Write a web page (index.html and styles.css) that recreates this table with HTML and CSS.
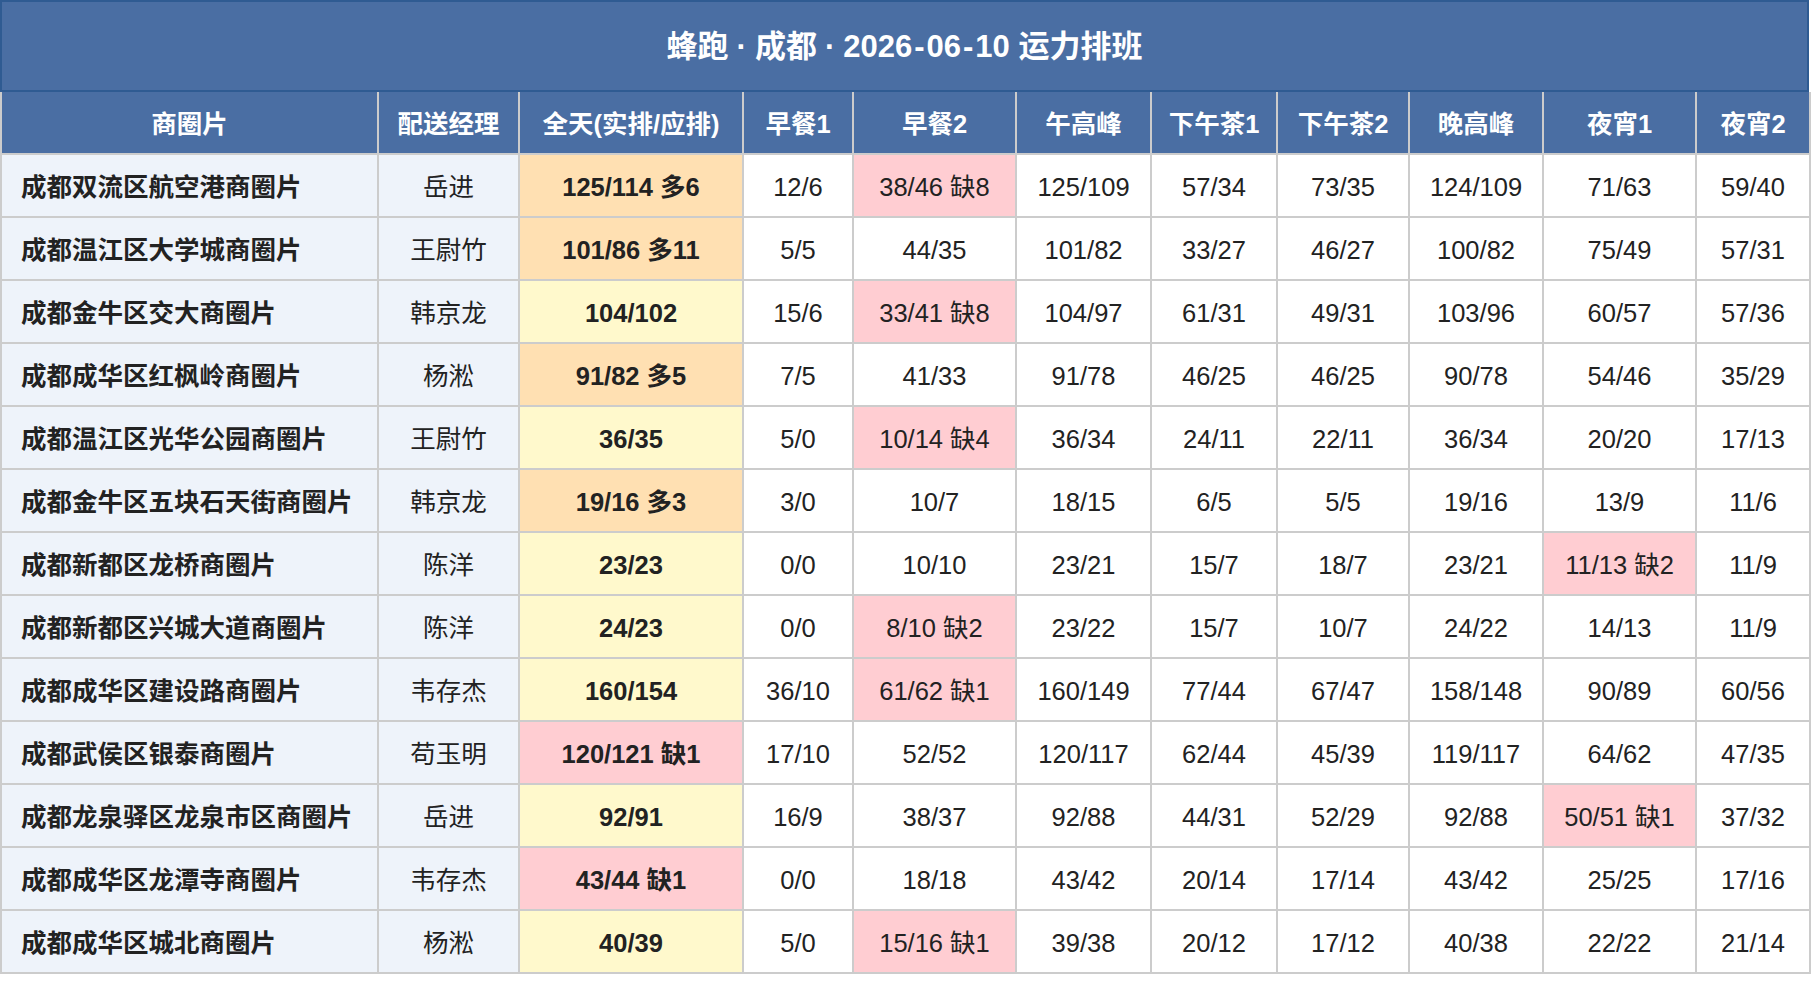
FILE: index.html
```html
<!DOCTYPE html>
<html lang="zh-CN">
<head>
<meta charset="utf-8">
<title>运力排班</title>
<link rel="stylesheet" href="styles.css">
</head>
<body>
<div class="sheet">
  <div class="title">蜂跑<span class="dot">·</span>成都<span class="dot">·</span>2026<span class="dash">-</span>06<span class="dash">-</span>10 运力排班</div>
  <table class="grid">
    <colgroup>
      <col class="c-area"><col class="c-mgr"><col class="c-day"><col class="c-b1"><col class="c-b2"><col class="c-noon"><col class="c-t1"><col class="c-t2"><col class="c-eve"><col class="c-n1"><col class="c-n2">
    </colgroup>
    <thead>
      <tr><th>商圈片</th><th>配送经理</th><th>全天(实排/应排)</th><th>早餐1</th><th>早餐2</th><th>午高峰</th><th>下午茶1</th><th>下午茶2</th><th>晚高峰</th><th>夜宵1</th><th>夜宵2</th></tr>
    </thead>
    <tbody>
      <tr><td class="area">成都双流区航空港商圈片</td><td class="mgr">岳进</td><td class="day over">125/114 多6</td><td>12/6</td><td class="short">38/46 缺8</td><td>125/109</td><td>57/34</td><td>73/35</td><td>124/109</td><td>71/63</td><td>59/40</td></tr>
      <tr><td class="area">成都温江区大学城商圈片</td><td class="mgr">王尉竹</td><td class="day over">101/86 多11</td><td>5/5</td><td>44/35</td><td>101/82</td><td>33/27</td><td>46/27</td><td>100/82</td><td>75/49</td><td>57/31</td></tr>
      <tr><td class="area">成都金牛区交大商圈片</td><td class="mgr">韩京龙</td><td class="day ok">104/102</td><td>15/6</td><td class="short">33/41 缺8</td><td>104/97</td><td>61/31</td><td>49/31</td><td>103/96</td><td>60/57</td><td>57/36</td></tr>
      <tr><td class="area">成都成华区红枫岭商圈片</td><td class="mgr">杨淞</td><td class="day over">91/82 多5</td><td>7/5</td><td>41/33</td><td>91/78</td><td>46/25</td><td>46/25</td><td>90/78</td><td>54/46</td><td>35/29</td></tr>
      <tr><td class="area">成都温江区光华公园商圈片</td><td class="mgr">王尉竹</td><td class="day ok">36/35</td><td>5/0</td><td class="short">10/14 缺4</td><td>36/34</td><td>24/11</td><td>22/11</td><td>36/34</td><td>20/20</td><td>17/13</td></tr>
      <tr><td class="area">成都金牛区五块石天街商圈片</td><td class="mgr">韩京龙</td><td class="day over">19/16 多3</td><td>3/0</td><td>10/7</td><td>18/15</td><td>6/5</td><td>5/5</td><td>19/16</td><td>13/9</td><td>11/6</td></tr>
      <tr><td class="area">成都新都区龙桥商圈片</td><td class="mgr">陈洋</td><td class="day ok">23/23</td><td>0/0</td><td>10/10</td><td>23/21</td><td>15/7</td><td>18/7</td><td>23/21</td><td class="short">11/13 缺2</td><td>11/9</td></tr>
      <tr><td class="area">成都新都区兴城大道商圈片</td><td class="mgr">陈洋</td><td class="day ok">24/23</td><td>0/0</td><td class="short">8/10 缺2</td><td>23/22</td><td>15/7</td><td>10/7</td><td>24/22</td><td>14/13</td><td>11/9</td></tr>
      <tr><td class="area">成都成华区建设路商圈片</td><td class="mgr">韦存杰</td><td class="day ok">160/154</td><td>36/10</td><td class="short">61/62 缺1</td><td>160/149</td><td>77/44</td><td>67/47</td><td>158/148</td><td>90/89</td><td>60/56</td></tr>
      <tr><td class="area">成都武侯区银泰商圈片</td><td class="mgr">苟玉明</td><td class="day short">120/121 缺1</td><td>17/10</td><td>52/52</td><td>120/117</td><td>62/44</td><td>45/39</td><td>119/117</td><td>64/62</td><td>47/35</td></tr>
      <tr><td class="area">成都龙泉驿区龙泉市区商圈片</td><td class="mgr">岳进</td><td class="day ok">92/91</td><td>16/9</td><td>38/37</td><td>92/88</td><td>44/31</td><td>52/29</td><td>92/88</td><td class="short">50/51 缺1</td><td>37/32</td></tr>
      <tr><td class="area">成都成华区龙潭寺商圈片</td><td class="mgr">韦存杰</td><td class="day short">43/44 缺1</td><td>0/0</td><td>18/18</td><td>43/42</td><td>20/14</td><td>17/14</td><td>43/42</td><td>25/25</td><td>17/16</td></tr>
      <tr><td class="area">成都成华区城北商圈片</td><td class="mgr">杨淞</td><td class="day ok">40/39</td><td>5/0</td><td class="short">15/16 缺1</td><td>39/38</td><td>20/12</td><td>17/12</td><td>40/38</td><td>22/22</td><td>21/14</td></tr>
    </tbody>
  </table>
</div>
</body>
</html>
```

FILE: styles.css
```css
html, body {
  margin: 0;
  padding: 0;
  background: #ffffff;
}

body {
  font-family: "Liberation Sans", "Noto Sans CJK SC", sans-serif;
  color: #222222;
}

.sheet {
  width: 1809px;
}

.title {
  box-sizing: border-box;
  height: 92px;
  background: #4a6ea3;
  border: 2px solid #2f5b92;
  color: #ffffff;
  font-size: 31px;
  font-weight: bold;
  line-height: 1.2;
  padding-top: 2px;
  display: flex;
  align-items: center;
  justify-content: center;
}

.title .dot {
  padding: 0 8px;
}

.title .dash {
  padding: 0 2px;
}

.grid {
  width: 1809px;
  table-layout: fixed;
  border-collapse: collapse;
  font-size: 25.5px;
  line-height: 1.2;
}

.c-area { width: 377px; }
.c-mgr { width: 141px; }
.c-day { width: 224px; }
.c-b1 { width: 110px; }
.c-b2 { width: 163px; }
.c-noon { width: 135px; }
.c-t1 { width: 126px; }
.c-t2 { width: 132px; }
.c-eve { width: 134px; }
.c-n1 { width: 153px; }
.c-n2 { width: 114px; }

.grid th {
  height: 57px;
  padding: 4px 0 0;
  background: #4a6ea3;
  color: #ffffff;
  font-weight: bold;
  text-align: center;
  border: 2px solid #cccccc;
  border-top: none;
}

.grid td {
  height: 58px;
  padding: 3px 0 0;
  text-align: center;
  border: 2px solid #cccccc;
  white-space: nowrap;
}

.grid td.area {
  text-align: left;
  padding-left: 19px;
  font-weight: bold;
  background: #eef3fa;
}

.grid td.mgr {
  background: #eef3fa;
}

.grid td.day {
  font-weight: bold;
}

.grid td.ok {
  background: #fff9cc;
}

.grid td.over {
  background: #ffe0b2;
}

.grid td.short {
  background: #ffcdd2;
}
```
